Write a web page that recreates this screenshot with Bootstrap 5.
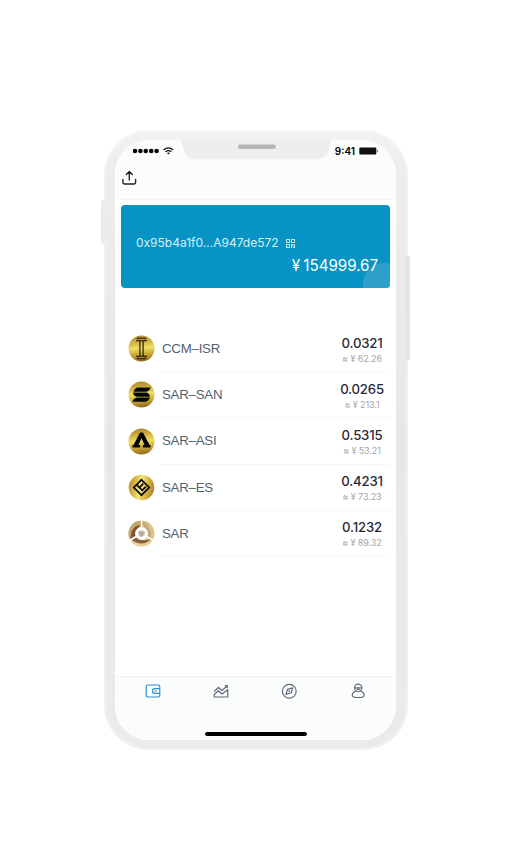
<!DOCTYPE html>
<html lang="en">
<head>
<meta charset="utf-8">
<meta name="viewport" content="width=device-width, initial-scale=1">
<title>Wallet</title>
<link href="https://cdn.jsdelivr.net/npm/bootstrap@5.3.0/dist/css/bootstrap.min.css" rel="stylesheet">
<style>
body{font-family:Inter,"Liberation Sans",sans-serif;background:#fff;height:864px;overflow:hidden;line-height:1}
svg{display:block;flex:none}
.phone{width:304px;height:620px;margin:130px 0 0 103.5px;padding:10px 11.5px 10px 11px;border-radius:45px;background:linear-gradient(180deg,#f3f3f3 0,#ededed 6%,#e7e7e7 50%,#ebebeb 100%);box-shadow:inset 0 0 3px 1px #f6f6f6}
.side-l,.side-r{position:absolute;background:#ebebeb;z-index:-1;border-radius:2px}
.side-l{left:-2.5px;top:70px;width:5px;height:44px}
.side-r{right:-2.5px;top:126px;width:5px;height:104px;background:#e4e4e4}
.screen{height:600px;border-radius:34px;background:#fff;overflow:hidden}
.topbar{height:60px;background:#fbfdfc;border-bottom:1px solid #f4f5f5}
.notch{position:absolute;left:62px;top:0}
.status{height:22px;padding:0 18px;color:#000}
.clock{font-size:10px;font-weight:600}
.share{margin:8px 0 0 7px}
.balance{height:83px;margin:5px 6px 0 6.5px;border-radius:4px;background:#0793c3;color:#fff;padding:31px 12px 0 15px;overflow:hidden}
.bubble{position:absolute;right:-15px;bottom:-17px;width:42px;height:42px;border-radius:50%;background:#2d9fcb}
.addr{font-size:12px;color:#d7f0f9;line-height:14px}
.qr{margin-left:7px}
.total{font-size:15.2px;line-height:18px;margin-top:7px;font-weight:400;letter-spacing:-.05px;word-spacing:-1px}
.assets{margin:38px 6px 0 13px}
.asset{height:46.2px}
.asset-body{margin-left:6.5px;border-bottom:1px solid #f7f7f7;padding-right:6px}
.coin{width:27px;height:27px;margin-top:9.2px}
.asset-name{font-family:"Liberation Sans",Arial,sans-serif;font-size:13.3px;color:#53616f;line-height:46px;padding-left:1px;letter-spacing:-.25px}
.amounts{width:44px}
.amt{font-size:13.2px;font-weight:500;color:#292936;line-height:16px;margin-top:8.6px;letter-spacing:-.2px}
.fiat{font-size:9px;color:#a4a4a4;line-height:11px;margin-top:2px;letter-spacing:-.1px}
.tabbar{height:64px;background:#fbfdfc;border-top:1px solid #f1f3f3;padding:6px 4px 0}
.homebar{position:absolute;left:90.5px;bottom:4.5px;width:102px;height:4px;border-radius:2px;background:#000}
</style>
</head>
<body>
<div class="phone position-relative z-0">
<div class="side-l"></div><div class="side-r"></div>
<main class="screen position-relative d-flex flex-column">
 <header class="topbar position-relative flex-shrink-0">
  <svg class="notch" width="158" height="20" viewBox="0 0 158 20"><path d="M0 0C5 0 5 3 6 8C8 15 11 19.500 19 19.500H139C147 19.500 151 15 152 9C153 3 153 0 158 0Z" fill="#eee"/><rect x="61" y="4.500" width="38" height="4.500" rx="2.200" fill="#b5b5b5"/></svg>
  <div class="status d-flex align-items-center justify-content-between">
   <div class="d-flex align-items-center">
    <svg width="26" height="6" viewBox="0 0 26 6"><g fill="#050505"><circle cx="2" cy="3" r="2.300"/><circle cx="7.400" cy="3" r="2.300"/><circle cx="12.800" cy="3" r="2.300"/><circle cx="18.200" cy="3" r="2.300"/><circle cx="23.600" cy="3" r="2.300"/></g></svg>
    <svg class="ms-1" width="11" height="8" viewBox="0 0 11 8"><g fill="none" stroke="#111" stroke-width="1.200"><path d="M.6 3Q5.300-1.200 10.200 3M2.400 4.900Q5.400 2.300 8.400 4.900"/></g><path d="M3.900 6Q5.400 4.900 6.900 6L5.400 7.600Z" fill="#111"/></svg>
   </div>
   <div class="d-flex align-items-center gap-1"><span class="clock">9:41</span>
    <svg width="19" height="8" viewBox="0 0 19 8"><rect x=".3" y=".4" width="17" height="7.200" rx="1" fill="#111"/><path d="M18 2.600Q19.300 4 18 5.400Z" fill="#111"/></svg></div>
  </div>
  <svg class="share" width="15" height="16" viewBox="0 0 15 16" fill="none" stroke="#222" stroke-width="1.400" stroke-linecap="round" stroke-linejoin="round"><path d="M7.300 10V1.700M4.300 4.600L7.300 1.500L10.300 4.600M.9 9.500V12.600Q.9 14 2.300 14H12.200Q13.600 14 13.600 12.600V9.500"/></svg>
 </header>
 <section class="balance position-relative flex-shrink-0">
  <div class="bubble"></div>
  <div class="d-flex align-items-center position-relative"><span class="addr">0x95b4a1f0…A947de572</span>
   <svg class="qr" width="9" height="9" viewBox="0 0 9 9"><g fill="none" stroke="#c2e7f3"><rect x=".5" y=".5" width="3" height="3"/><rect x="5.500" y=".5" width="3" height="3"/><rect x=".5" y="5.500" width="3" height="3"/><path d="M5.500 9V5.500H7V7.500M8.500 5V9M7 8.500H8.500"/></g></svg>
  </div>
  <div class="total text-end position-relative">¥ 154999.67</div>
 </section>
 <section class="assets flex-grow-1">
  <svg width="0" height="0" class="position-absolute"><defs><linearGradient id="gold" x1="0" y1="0" x2=".1" y2="1"><stop offset="0" stop-color="#a98229"/><stop offset=".3" stop-color="#d2b240"/><stop offset=".52" stop-color="#efdf67"/><stop offset=".75" stop-color="#cdac3b"/><stop offset="1" stop-color="#977020"/></linearGradient><linearGradient id="gold2" x1="0" y1=".4" x2="1" y2=".6"><stop offset="0" stop-color="#b99130"/><stop offset=".25" stop-color="#ddbd4a"/><stop offset=".45" stop-color="#f3e781"/><stop offset=".75" stop-color="#d1ac3b"/><stop offset="1" stop-color="#ac8329"/></linearGradient></defs></svg>
  <div class="asset d-flex">
   <svg class="coin" viewBox="0 0 27 27"><circle cx="13.500" cy="13.500" r="13" fill="url(#gold)"/><path d="M9 3.200H18M8 5.800H19M11.900 6V21M15.100 6V21M8 21.200H19M9 23.800H18" fill="none" stroke="#18150a" stroke-width="1.100"/><path d="M9 3.500L11.900 7M18 3.500L15.100 7M9 23.500L11.900 20M18 23.500L15.100 20" fill="none" stroke="#2d260c" stroke-width=".7"/></svg>
   <div class="asset-body d-flex justify-content-between flex-grow-1"><span class="asset-name">CCM–ISR</span><div class="amounts d-flex flex-column align-items-center text-nowrap"><div class="amt">0.0321</div><div class="fiat">≈ ¥ 62.26</div></div></div>
  </div>
  <div class="asset d-flex">
   <svg class="coin" viewBox="0 0 27 27"><circle cx="13.500" cy="13.500" r="13" fill="url(#gold)"/><path d="M10 6.500H22.500Q21.500 10.500 18 10.700H5.500Q7 6.800 10 6.500ZM5 11.500H18.500Q21.500 12.200 22 15.700H9Q5.500 15.300 5 11.500ZM9 16.500H22Q20.500 20.600 17 20.800H4.500Q5.800 16.900 9 16.500Z" fill="#050505"/></svg>
   <div class="asset-body d-flex justify-content-between flex-grow-1"><span class="asset-name">SAR–SAN</span><div class="amounts d-flex flex-column align-items-center text-nowrap"><div class="amt">0.0265</div><div class="fiat">≈ ¥ 213.1</div></div></div>
  </div>
  <div class="asset d-flex">
   <svg class="coin" viewBox="0 0 27 27"><circle cx="13.500" cy="13.500" r="13" fill="url(#gold)"/><path d="M12 4.500H15L21.500 17H22.500V19.500H14.800V17H16.500L13.500 10.200L10.500 17H12.200V19.500H4.500V17H5.500Z" fill="#050505"/></svg>
   <div class="asset-body d-flex justify-content-between flex-grow-1"><span class="asset-name">SAR–ASI</span><div class="amounts d-flex flex-column align-items-center text-nowrap"><div class="amt">0.5315</div><div class="fiat">≈ ¥ 53.21</div></div></div>
  </div>
  <div class="asset d-flex">
   <svg class="coin" viewBox="0 0 27 27"><circle cx="13.500" cy="13.500" r="12.800" fill="url(#gold2)"/><path d="M13.500 5.800L21.200 13.500L13.500 21.200L5.800 13.500ZM8.600 10.700L14.200 16.300L17.900 12.600M11.400 13.500L15.300 9.600" fill="none" stroke="#0a0905" stroke-width="1.700"/></svg>
   <div class="asset-body d-flex justify-content-between flex-grow-1"><span class="asset-name">SAR–ES</span><div class="amounts d-flex flex-column align-items-center text-nowrap"><div class="amt">0.4231</div><div class="fiat">≈ ¥ 73.23</div></div></div>
  </div>
  <div class="asset d-flex">
   <svg class="coin" viewBox="0 0 27 27"><path d="M13.500 13.500V.5A13 13 0 0 0 2.200 20Z" fill="#c5a56c"/><path d="M13.500 13.500V.5A13 13 0 0 1 24.800 20Z" fill="#d9c38c"/><path d="M13.500 13.500L24.800 20A13 13 0 0 1 2.200 20Z" fill="#e6ce9c"/><path d="M12.500 5Q3 6 2.500 18.500L9 15Q8 9 12.500 5Z" fill="#80542d"/><path d="M14.500 1Q23 5 23 18L18 15Q19 9 14.500 5Z" fill="#c9a877"/><path d="M4 20L9 17Q14 22 23 19Q17 25 10 23Q7 22.500 4 20Z" fill="#8e6038"/><path d="M13.500 13.500V0M13.500 13.500L25 20.200M13.500 13.500L2 20.200" stroke="#fff" stroke-width="1.500"/><circle cx="13.500" cy="13.500" r="6.500" fill="#fff"/><path d="M13.500 10L16.700 11.700V15.300L13.500 17.200L10.300 15.300V11.700Z" fill="#d0bcae"/><path d="M10.500 12L13.500 13.500L16.500 12M13.500 13.500V17" stroke="#937762" stroke-width=".6" fill="none"/></svg>
   <div class="asset-body d-flex justify-content-between flex-grow-1"><span class="asset-name">SAR</span><div class="amounts d-flex flex-column align-items-center text-nowrap"><div class="amt">0.1232</div><div class="fiat">≈ ¥ 89.32</div></div></div>
  </div>
 </section>
 <nav class="tabbar d-flex justify-content-around flex-shrink-0">
  <svg width="16" height="16" viewBox="0 0 16 16" fill="none" stroke="#2e8fd0" stroke-width="1.200"><rect x="1.200" y="2" width="13.600" height="12" rx="1.800"/><path d="M14.800 5.700H9.700A2.300 2.300 0 0 0 9.700 10.300H14.800M9.500 8H12"/></svg>
  <svg width="16" height="16" viewBox="0 0 16 16" fill="none" stroke="#5d6b79" stroke-width="1.200" stroke-linejoin="round"><path d="M1.200 8.500L5.500 4.500L9 7.500L14 3M11.800 2.700H14.300V5.200M1.200 14V11.500L5.500 7.800L9 11L14.700 6.700V14Z"/></svg>
  <svg width="16" height="16" viewBox="0 0 16 16" fill="none" stroke="#5d6b79" stroke-width="1.200"><circle cx="8.300" cy="8.200" r="6.900"/><path d="M11.600 4.900L10.300 9.700L5 11.500L6.500 6.400Z" stroke-linejoin="round"/><circle cx="8.300" cy="8.200" r=".3"/></svg>
  <svg width="16" height="16" viewBox="0 0 16 16" fill="none" stroke="#5d6b79" stroke-width="1.100"><circle cx="8.200" cy="4.800" r="3.700"/><path d="M5.800 7.700Q2.200 9.700 2.200 12.400Q2.200 14.400 8.200 14.500Q14.200 14.400 14.200 12.400Q14.200 9.700 10.600 7.700M5 4.900H11.400M6.700 6.400H9.700"/></svg>
 </nav>
 <div class="homebar"></div>
</main>
</div>
<script src="https://cdn.jsdelivr.net/npm/bootstrap@5.3.0/dist/js/bootstrap.bundle.min.js"></script>
</body>
</html>
